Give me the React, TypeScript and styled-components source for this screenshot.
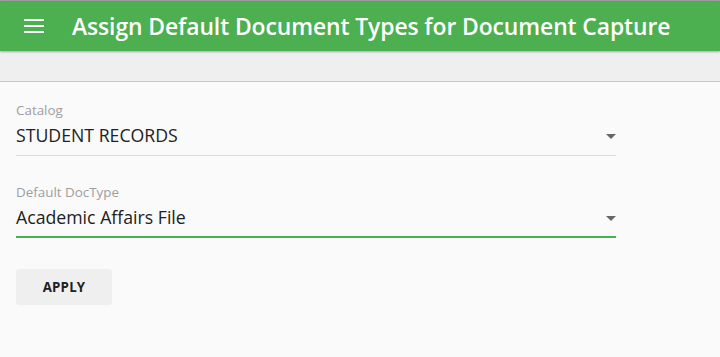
import styled, { createGlobalStyle } from "styled-components";

const GlobalStyle = createGlobalStyle`
  html, body {
    margin: 0;
    padding: 0;
    background: #fafafa;
    font-family: "Open Sans", "Noto Sans", sans-serif;
  }
`;

const Page = styled.div`
  min-height: 357px;
  background: #fafafa;
  border-top: 1px solid #9e9e9e;
`;

const AppBar = styled.header`
  display: flex;
  align-items: center;
  height: 50px;
  padding: 0 24px;
  gap: 28px;
  background: #4caf50;
  color: #fff;
  position: relative;
  z-index: 1;
  box-shadow: 0 1px 2px rgba(0, 0, 0, 0.3);
`;

const MenuButton = styled.button`
  display: flex;
  flex-direction: column;
  justify-content: space-between;
  width: 20px;
  height: 14px;
  padding: 0;
  border: none;
  background: none;
  cursor: pointer;

  span {
    display: block;
    height: 2px;
    background: #fff;
  }
`;

const Title = styled.h1`
  margin: 0;
  font-size: 22.9px;
  font-weight: 600;
  letter-spacing: -0.1px;
  white-space: nowrap;
`;

const SubBar = styled.div`
  height: 30px;
  background: #efefef;
  border-bottom: 1px solid #c8c8c8;
`;

const Form = styled.main`
  display: flex;
  flex-direction: column;
  gap: 27px;
  padding: 19px 16px;
  width: 600px;
`;

const Field = styled.div<{ $active?: boolean }>`
  display: flex;
  flex-direction: column;
  border-bottom: ${(p) => (p.$active ? "2px solid #4caf50" : "1px solid #dcdcdc")};
  padding-bottom: ${(p) => (p.$active ? "8px" : "9px")};
  cursor: pointer;
`;

const Label = styled.label`
  font-size: 13.4px;
  line-height: 18px;
  color: #9e9e9e;
`;

const ValueRow = styled.div`
  display: flex;
  align-items: center;
  justify-content: space-between;
  margin-top: 5px;
`;

const Value = styled.span`
  font-size: 17.7px;
  line-height: 22px;
  color: #212121;
`;

const Caret = styled.span`
  width: 0;
  height: 0;
  border-left: 5px solid transparent;
  border-right: 5px solid transparent;
  border-top: 5px solid #666;
  margin-top: 3px;
`;

const ApplyButton = styled.button`
  align-self: flex-start;
  margin-top: 4px;
  width: 96px;
  height: 36px;
  border: none;
  border-radius: 3px;
  background: #efefef;
  color: #212121;
  font-family: inherit;
  font-size: 13.3px;
  font-weight: 700;
  letter-spacing: 0.2px;
  cursor: pointer;
`;

function SelectField({ label, value, active }: { label: string; value: string; active?: boolean }) {
  return (
    <Field $active={active}>
      <Label>{label}</Label>
      <ValueRow>
        <Value>{value}</Value>
        <Caret />
      </ValueRow>
    </Field>
  );
}

export default function App() {
  return (
    <Page>
      <GlobalStyle />
      <AppBar>
        <MenuButton aria-label="menu">
          <span />
          <span />
          <span />
        </MenuButton>
        <Title>Assign Default Document Types for Document Capture</Title>
      </AppBar>
      <SubBar />
      <Form>
        <SelectField label="Catalog" value="STUDENT RECORDS" />
        <SelectField label="Default DocType" value="Academic Affairs File" active />
        <ApplyButton>APPLY</ApplyButton>
      </Form>
    </Page>
  );
}
